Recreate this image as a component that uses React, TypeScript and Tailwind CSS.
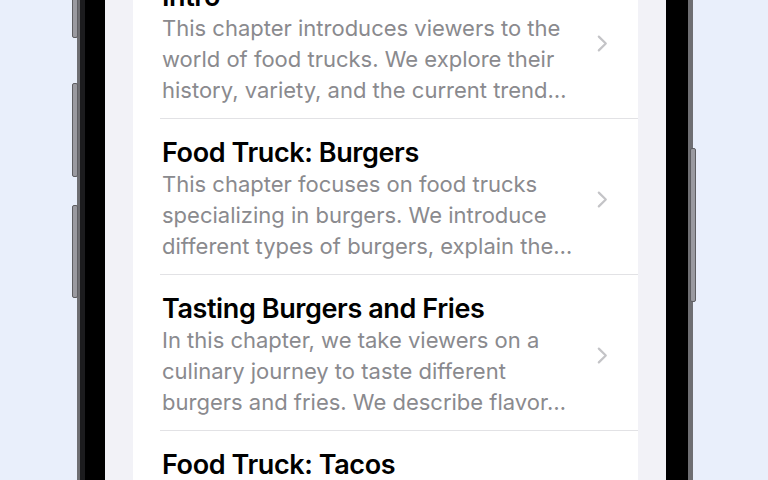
type Chapter = { title: string; lines: string[] };

const CHAPTERS: Chapter[] = [
  {
    title: "Intro",
    lines: [
      "This chapter introduces viewers to the",
      "world of food trucks. We explore their",
      "history, variety, and the current trend…",
    ],
  },
  {
    title: "Food Truck: Burgers",
    lines: [
      "This chapter focuses on food trucks",
      "specializing in burgers. We introduce",
      "different types of burgers, explain the…",
    ],
  },
  {
    title: "Tasting Burgers and Fries",
    lines: [
      "In this chapter, we take viewers on a",
      "culinary journey to taste different",
      "burgers and fries. We describe flavor…",
    ],
  },
  {
    title: "Food Truck: Tacos",
    lines: [
      "This chapter explores the world of taco",
      "trucks. We look at regional styles and",
      "the fillings that make each one unique…",
    ],
  },
];

function Chevron() {
  return (
    <svg width="11" height="17" viewBox="0 0 11 17" className="shrink-0" fill="none">
      <polyline
        points="1.8,1.6 8.8,8.5 1.8,15.4"
        stroke="#c4c4c7"
        strokeWidth="2.2"
        strokeLinecap="round"
        strokeLinejoin="round"
      />
    </svg>
  );
}

function ChapterRow({ chapter }: { chapter: Chapter }) {
  return (
    <div className="pl-[27px]">
      <div className="flex items-center border-b border-[#e2e2e5] pt-[18px] pb-[12px] pr-[30px]">
        <div className="flex-1 min-w-0 pl-[2px]">
          <div className="text-[27px] leading-[32px] font-semibold text-black tracking-[-0.4px]">
            {chapter.title}
          </div>
          <div className="text-[22px] leading-[31px] text-[#8a8a8e]">
            {chapter.lines.map((l) => (
              <div key={l} className="whitespace-nowrap">{l}</div>
            ))}
          </div>
        </div>
        <Chevron />
      </div>
    </div>
  );
}

export default function App() {
  return (
    <div
      className="w-[768px] h-[480px] overflow-hidden bg-[#e9effb] flex"
      style={{ fontFamily: "Inter, 'Noto Sans', sans-serif" }}
    >
      {/* phone */}
      <div className="relative ml-[77px] w-[616px] h-[480px] bg-[#6e6e72] pl-[3px] pr-[5px]">
        {/* side buttons */}
        <div className="absolute left-[-5px] top-[-10px] h-[48px] w-[6px] rounded-[2px] bg-[#9a9aa0] border border-[#5e5e62]" />
        <div className="absolute left-[-5px] top-[83px] h-[94px] w-[6px] rounded-[2px] bg-[#9a9aa0] border border-[#5e5e62]" />
        <div className="absolute left-[-5px] top-[205px] h-[93px] w-[6px] rounded-[2px] bg-[#9a9aa0] border border-[#5e5e62]" />
        <div className="absolute right-[-3px] top-[148px] h-[154px] w-[6px] rounded-[2px] bg-[#9a9aa0] border border-[#5e5e62]" />

        <div className="flex h-full bg-black pl-[20px] pr-[22px] border-l-[5px] border-[#1c1c1e]">
          <div className="flex-1 bg-[#f2f2f7] px-[28px] overflow-hidden">
            <div className="bg-white mt-[-37px]">
              {CHAPTERS.map((c) => (
                <ChapterRow key={c.title} chapter={c} />
              ))}
            </div>
          </div>
        </div>
      </div>
      <div className="flex-1" />
    </div>
  );
}
